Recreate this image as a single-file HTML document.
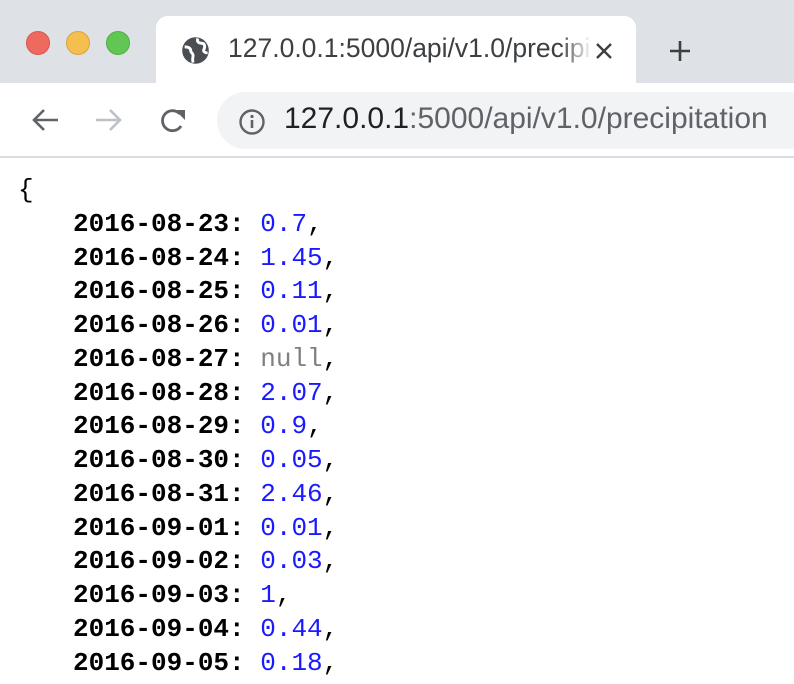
<!DOCTYPE html>
<html><head><style>
body{margin:0;width:794px;height:684px;overflow:hidden;background:#fff;font-family:"Liberation Sans",sans-serif;position:relative}
.tabbar{position:absolute;left:0;top:0;width:794px;height:83px;background:#dee1e6}
.dot{position:absolute;top:31px;width:23px;height:23px;border-radius:50%}
.tab{position:absolute;left:156px;top:16px;width:480px;height:70px;background:#fff;border-radius:12px 12px 0 0}
.tabtitle{position:absolute;left:228px;top:33px;font-size:26.5px;color:#3c4043;white-space:nowrap;width:362px;overflow:hidden}
.toolbar{position:absolute;left:0;top:83px;width:794px;height:73px;background:#fff;border-bottom:2px solid #dadce0}
.omni{position:absolute;left:217px;top:92px;width:600px;height:57px;background:#f1f3f4;border-radius:29px}
.url{position:absolute;left:284px;top:102px;font-size:30px;color:#5f6368;white-space:nowrap}
.url b{font-weight:normal;color:#202124}
pre{position:absolute;left:18px;top:174px;margin:0;font-family:"Liberation Mono",monospace;font-size:26px;line-height:33.75px;color:#000}
.l{padding-left:55px;display:block}
.k{font-weight:bold}.n{color:#1a1aff}.z{color:#808080}
</style></head><body>
<div class="tabbar"></div>
<div class="dot" style="left:26px;background:#ee6a5f;border:1px solid #d9544a;width:22px;height:22px"></div>
<div class="dot" style="left:66px;background:#f5bf4f;border:1px solid #d9a33d;width:22px;height:22px"></div>
<div class="dot" style="left:106px;background:#62c655;border:1px solid #4fae44;width:22px;height:22px"></div>
<div class="tab"></div>
<svg style="position:absolute;left:181px;top:36px" width="29" height="29" viewBox="0 0 24 24"><circle cx="12" cy="12" r="11" fill="#4a4d52"/><path d="M3 9c3 0 5 1 5 3s2 2 2 4-1 3 0 6M14 2c-1 2 0 4 3 4s3 3 2 5 1 3 3 3" stroke="#fff" stroke-width="2.4" fill="none"/></svg>
<div class="tabtitle">127.0.0.1:5000/api/v1.0/precipitation</div>
<div style="position:absolute;left:560px;top:30px;width:32px;height:40px;background:linear-gradient(90deg,rgba(255,255,255,0),#fff)"></div>
<svg style="position:absolute;left:594px;top:41px" width="20" height="20" viewBox="0 0 20 20"><path d="M3 3L17 17M17 3L3 17" stroke="#3c4043" stroke-width="2.4"/></svg>
<svg style="position:absolute;left:668px;top:39px" width="24" height="24" viewBox="0 0 24 24"><path d="M12 2V22M2 12H22" stroke="#3c4043" stroke-width="2.6"/></svg>
<div class="toolbar"></div>
<svg style="position:absolute;left:30px;top:107px" width="30" height="26" viewBox="0 0 30 26"><path d="M28 13H4M14 3L4 13L14 23" stroke="#5f6368" stroke-width="2.6" fill="none"/></svg>
<svg style="position:absolute;left:94px;top:107px" width="30" height="26" viewBox="0 0 30 26"><path d="M2 13H26M16 3L26 13L16 23" stroke="#bdc1c6" stroke-width="2.6" fill="none"/></svg>
<svg style="position:absolute;left:158px;top:106px" width="30" height="30" viewBox="0 0 30 30"><path d="M23 20A10 10 0 1 1 22 8" stroke="#5f6368" stroke-width="2.8" fill="none"/><path d="M17 4H27V14Z" fill="#5f6368"/></svg>
<div class="omni"></div>
<svg style="position:absolute;left:238px;top:108px" width="28" height="28" viewBox="0 0 28 28"><circle cx="14" cy="14" r="11.5" stroke="#5f6368" stroke-width="2.4" fill="none"/><path d="M14 12V20" stroke="#5f6368" stroke-width="2.6"/><circle cx="14" cy="8.5" r="1.6" fill="#5f6368"/></svg>
<div class="url"><b>127.0.0.1</b>:5000/api/v1.0/precipitation</div>
<pre>{
<span class="l"><span class="k">2016-08-23:</span> <span class="n">0.7</span>,</span><span class="l"><span class="k">2016-08-24:</span> <span class="n">1.45</span>,</span><span class="l"><span class="k">2016-08-25:</span> <span class="n">0.11</span>,</span><span class="l"><span class="k">2016-08-26:</span> <span class="n">0.01</span>,</span><span class="l"><span class="k">2016-08-27:</span> <span class="z">null</span>,</span><span class="l"><span class="k">2016-08-28:</span> <span class="n">2.07</span>,</span><span class="l"><span class="k">2016-08-29:</span> <span class="n">0.9</span>,</span><span class="l"><span class="k">2016-08-30:</span> <span class="n">0.05</span>,</span><span class="l"><span class="k">2016-08-31:</span> <span class="n">2.46</span>,</span><span class="l"><span class="k">2016-09-01:</span> <span class="n">0.01</span>,</span><span class="l"><span class="k">2016-09-02:</span> <span class="n">0.03</span>,</span><span class="l"><span class="k">2016-09-03:</span> <span class="n">1</span>,</span><span class="l"><span class="k">2016-09-04:</span> <span class="n">0.44</span>,</span><span class="l"><span class="k">2016-09-05:</span> <span class="n">0.18</span>,</span></pre>
</body></html>
